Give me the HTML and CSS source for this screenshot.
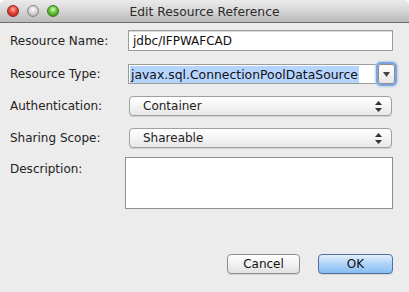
FILE: index.html
```html
<!DOCTYPE html>
<html lang="en">
<head>
    <meta charset="UTF-8">
    <meta name="viewport" content="width=device-width, initial-scale=1.0">
    <title>Edit Resource Reference</title>
    <link rel="stylesheet" href="styles.css">
</head>
<body>
    <div class="window">
        <div class="titlebar">
            <div class="lights">
                <span class="light red"></span>
                <span class="light gray"></span>
                <span class="light green"></span>
            </div>
            <div class="title">Edit Resource Reference</div>
        </div>

        <div class="form">
            <label class="label">Resource Name:</label>
            <div class="field text-field">jdbc/IFPWAFCAD</div>

            <label class="label">Resource Type:</label>
            <div class="combo">
                <div class="combo-text"><span class="selected">javax.sql.ConnectionPoolDataSource</span></div>
                <div class="combo-button">
                    <svg width="7" height="5" viewBox="0 0 7 5"><path d="M0 0 H7 L3.5 5 Z" fill="#444"/></svg>
                </div>
            </div>

            <label class="label">Authentication:</label>
            <div class="popup">
                <span>Container</span>
                <svg class="updown" width="7" height="11" viewBox="0 0 7 11"><path d="M3.5 0 L7 4 H0 Z M0 7 H7 L3.5 11 Z" fill="#333"/></svg>
            </div>

            <label class="label">Sharing Scope:</label>
            <div class="popup">
                <span>Shareable</span>
                <svg class="updown" width="7" height="11" viewBox="0 0 7 11"><path d="M3.5 0 L7 4 H0 Z M0 7 H7 L3.5 11 Z" fill="#333"/></svg>
            </div>

            <label class="label label-top">Description:</label>
            <div class="textarea"></div>
        </div>

        <div class="footer">
            <button class="btn">Cancel</button>
            <button class="btn btn-default">OK</button>
        </div>
    </div>
</body>
</html>
```

FILE: styles.css
```css
body {
    margin: 0;
    padding: 0;
    font-family: "DejaVu Sans", "Liberation Sans", sans-serif;
    font-size: 12px;
    color: #1e1e1e;
    background: #ffffff;
}

.window {
    width: 409px;
    height: 292px;
    background: #ececec;
    border-radius: 5px 5px 0 0;
    overflow: hidden;
}

.titlebar {
    position: relative;
    height: 22px;
    background: linear-gradient(#ebebeb 0%, #d6d6d6 50%, #b9b9b9 100%);
    border-bottom: 1px solid #6e6e6e;
    display: flex;
    align-items: center;
    justify-content: center;
}

.lights {
    position: absolute;
    left: 7px;
    top: 5px;
    display: flex;
    gap: 8px;
}

.light {
    width: 12px;
    height: 12px;
    border-radius: 50%;
    box-sizing: border-box;
}

.light.red {
    background: radial-gradient(circle at 50% 35%, #ffb3a8 0%, #e8463c 45%, #a8170f 100%);
    border: 1px solid #8a2b24;
}

.light.gray {
    background: radial-gradient(circle at 50% 35%, #ffffff 0%, #d2d2d2 50%, #9a9a9a 100%);
    border: 1px solid #858585;
}

.light.green {
    background: radial-gradient(circle at 50% 35%, #d6ffb8 0%, #63c33a 45%, #2d7a12 100%);
    border: 1px solid #3d7a26;
}

.title {
    font-size: 12.3px;
    color: #2b2b2b;
    padding-top: 1px;
}

.form {
    display: grid;
    grid-template-columns: 118px 265px;
    grid-template-rows: 21px 21px 20px 20px 51px;
    row-gap: 12px;
    padding: 7px 0 0 10px;
}

.label {
    display: flex;
    align-items: center;
    font-size: 12px;
    color: #222;
}

.label-top {
    align-items: flex-start;
    padding-top: 2px;
}

.field {
    box-sizing: border-box;
}

.text-field {
    background: #fff;
    border: 1px solid #9b9b9b;
    box-shadow: inset 0 1px 0 #d8d8d8;
    font-size: 12px;
    padding: 1px 4px;
    display: flex;
    align-items: center;
    color: #111;
}

.combo {
    display: flex;
    align-items: stretch;
    margin-top: 1px;
}

.combo-text {
    flex: 0 0 249px;
    box-sizing: border-box;
    background: #fff;
    border: 1px solid #9b9b9b;
    padding: 0 1px;
    display: flex;
    align-items: center;
    font-size: 12.4px;
}

.selected {
    background: #b5d5ff;
    padding: 1px 1px;
    color: #111;
}

.combo-button {
    flex: 0 0 17px;
    margin-left: 1px;
    box-sizing: border-box;
    border: 1px solid #8d8d8d;
    border-radius: 3px;
    background: linear-gradient(#ffffff, #e6e6e6);
    box-shadow: 0 0 0 2px #7ba7dc, 0 0 2px 3px #b5cfee;
    display: flex;
    align-items: center;
    justify-content: center;
}

.popup {
    box-sizing: border-box;
    margin-left: 1px;
    width: 263px;
    border: 1px solid #a0a0a0;
    border-radius: 4px;
    background: linear-gradient(#ffffff 0%, #f4f4f4 50%, #e8e8e8 100%);
    box-shadow: 0 1px 0 #d0d0d0;
    display: flex;
    align-items: center;
    justify-content: space-between;
    padding: 0 9px 0 13px;
    font-size: 12px;
}

.textarea {
    margin-left: -3px;
    margin-top: -3px;
    width: 268px;
    height: 52px;
    box-sizing: border-box;
    background: #fff;
    border: 1px solid #8f8f8f;
}

.footer {
    display: flex;
    justify-content: flex-end;
    gap: 18px;
    padding: 43px 16px 0 0;
}

.btn {
    font-family: "DejaVu Sans", "Liberation Sans", sans-serif;
    font-size: 12px;
    width: 73px;
    height: 20px;
    padding: 0;
    border: 1px solid #8e8e8e;
    border-radius: 4px;
    color: #111;
    background: linear-gradient(#ffffff 0%, #f1f1f1 50%, #e1e1e1 100%);
    box-shadow: 0 1px 0 #d4d4d4;
}

.btn-default {
    width: 75px;
    border-color: #4e6fa3;
    background: linear-gradient(#e2effc 0%, #b0d3f7 50%, #86bdf2 100%);
}
```
